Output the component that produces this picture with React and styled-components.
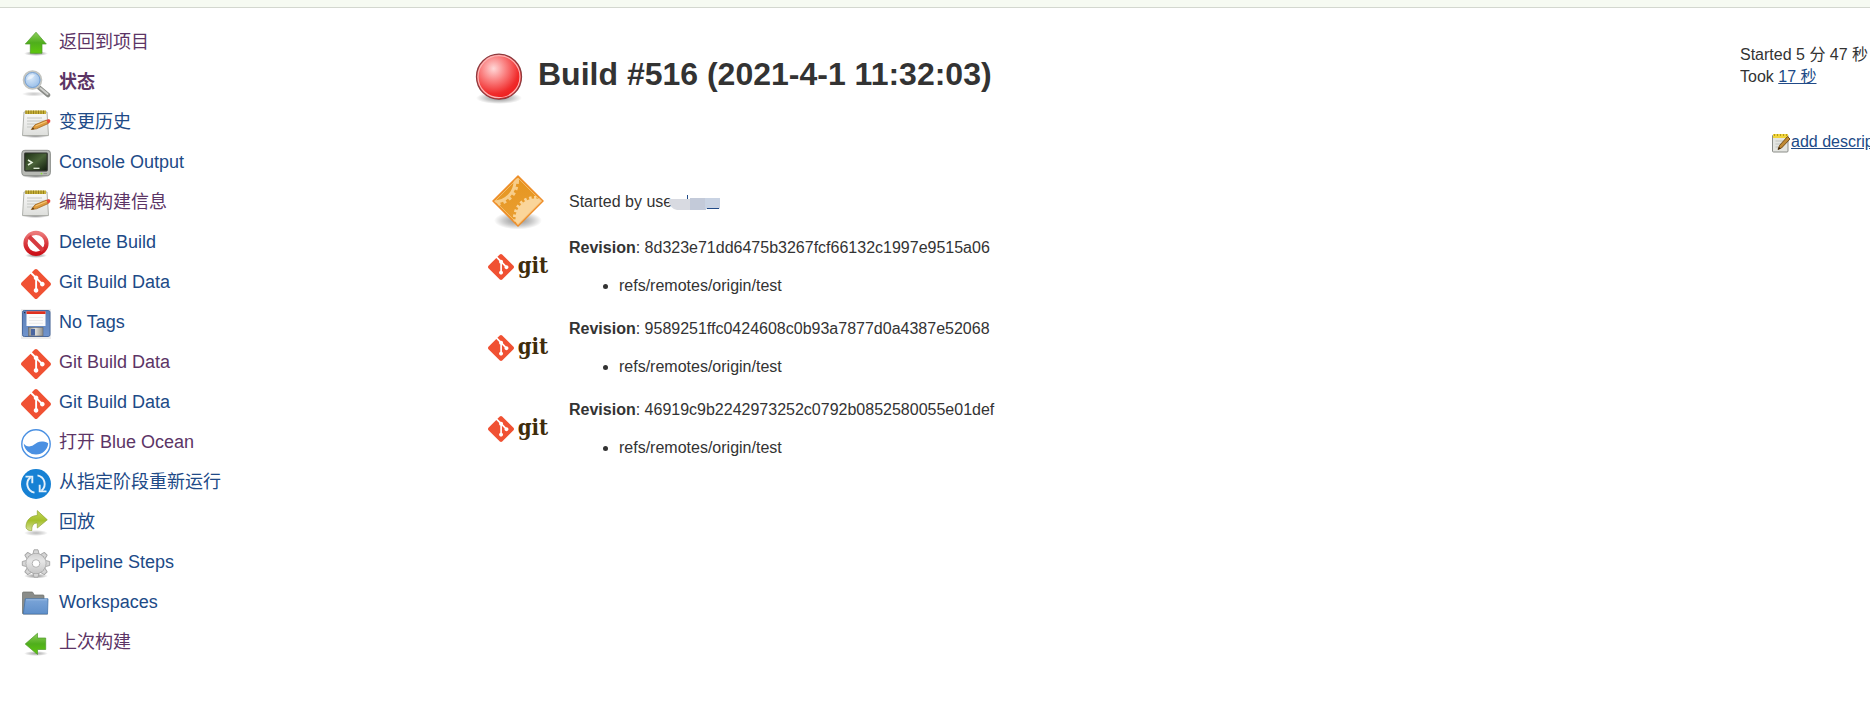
import React from 'react';
import styled, { createGlobalStyle } from 'styled-components';
import { SiGit } from 'react-icons/si';

let GlobalStyle = createGlobalStyle`
  body {
    margin: 0;
    background: #fff;
    color: #333;
    font-family: "Liberation Sans", "Noto Sans CJK SC", sans-serif;
    font-size: 16px;
    line-height: 22px;
    overflow-x: hidden;
  }`, Breadcrumbs = styled.header`
  height: 7px;
  background: #f6faf2;
  border-bottom: 1px solid #d3d7cf;`, Page = styled.div`
  display: flex;
  align-items: flex-start;`, Sidebar = styled.nav`
  flex: 0 0 454px;
  padding: 21px 0 0 21px;
  box-sizing: border-box;`, TaskList = styled.ul`
  display: flex;
  flex-direction: column;
  gap: 10px;
  margin: 0;
  padding: 0;
  list-style: none;`, TaskLink = styled.a`
  display: flex;
  align-items: flex-start;
  gap: 8px;
  color: ${({ $visited }) => $visited ? '#5c3566' : '#204a87'};
  font-size: 18px;
  font-weight: ${({ $current }) => $current ? 'bold' : 'normal'};
  line-height: 26px;
  text-decoration: none;
  &:hover { text-decoration: underline; }`, TaskIcon = styled.svg`
  flex: none;
  width: 30px;
  height: 30px;`, GitIcon = styled(SiGit)`
  flex: none;
  width: 30px;
  height: 30px;
  color: #f05133;`, Main = styled.main`
  flex: 1;
  min-width: 0;
  padding: 45px 0 0 21px;`, TitleRow = styled.div`
  display: flex;
  align-items: flex-start;
  gap: 15px;
  margin-bottom: 69px;`, Title = styled.h1`
  margin: 0;
  font-size: 32px;
  line-height: 42px;`, Summary = styled.section`
  display: grid;
  grid-template-columns: 86px 1fr;
  column-gap: 8px;
  align-items: center;
  margin-bottom: ${({ $tight }) => $tight ? '7px' : '21px'};`,
  SummaryIcon = styled.div`
  display: flex;
  justify-content: center;`, Cause = styled.p`
  display: flex;
  align-items: center;
  margin: 0;`, RefList = styled.ul`
  margin: 16px 0 0;
  padding-left: 50px;`, BuildInfo = styled.aside`
  flex: 0 0 130px;
  padding-top: 36px;
  white-space: nowrap;
  overflow: hidden;`, InfoLine = styled.div``, InfoLink = styled.a`
  color: #204a87;
  text-decoration: underline;`, Description = styled.div`
  display: flex;
  align-items: flex-start;
  gap: 1px;
  padding: 43px 0 0 32px;`, NoteIcon = styled.svg`
  flex: none;
  width: 18px;
  height: 22px;`;

// gradients shared by every icon on the page
function Gradients() {
  return <svg width="0" height="0" style={{ display: 'block' }}
    aria-hidden="true">
    <defs>
      <linearGradient id="green" x1="0" y1="0" x2="0" y2="1">
        <stop offset="0" stopColor="#8fcf5c" />
        <stop offset="0.5" stopColor="#4fae1c" />
        <stop offset="1" stopColor="#5fc80c" />
      </linearGradient>
      <radialGradient id="shadow">
        <stop offset="0" stopColor="#000" stopOpacity="0.45" />
        <stop offset="0.6" stopColor="#000" stopOpacity="0.2" />
        <stop offset="1" stopColor="#000" stopOpacity="0" />
      </radialGradient>
      <radialGradient id="lens" cx="0.4" cy="0.35" r="0.7">
        <stop offset="0" stopColor="#dcebfa" />
        <stop offset="1" stopColor="#8fb8e6" />
      </radialGradient>
      <linearGradient id="paper" x1="0" y1="0" x2="0" y2="1">
        <stop offset="0" stopColor="#fafafa" />
        <stop offset="1" stopColor="#dedfdc" />
      </linearGradient>
      <linearGradient id="screen" x1="0" y1="0" x2="1" y2="1">
        <stop offset="0" stopColor="#1e3014" />
        <stop offset="0.5" stopColor="#4a6338" />
        <stop offset="1" stopColor="#101a0b" />
      </linearGradient>
      <linearGradient id="stop" x1="0" y1="0" x2="0" y2="1">
        <stop offset="0" stopColor="#ec7a7a" />
        <stop offset="0.5" stopColor="#d93a3f" />
        <stop offset="1" stopColor="#cc1018" />
      </linearGradient>
      <linearGradient id="floppy" x1="0" y1="0" x2="0" y2="1">
        <stop offset="0" stopColor="#5a7fb8" />
        <stop offset="1" stopColor="#7094cc" />
      </linearGradient>
      <linearGradient id="metal" x1="0" y1="0" x2="1" y2="0">
        <stop offset="0" stopColor="#8a8a86" />
        <stop offset="0.5" stopColor="#dcdcd8" />
        <stop offset="1" stopColor="#8f8f8b" />
      </linearGradient>
      <linearGradient id="lime" x1="0" y1="0" x2="0" y2="1">
        <stop offset="0" stopColor="#c3d65a" />
        <stop offset="0.5" stopColor="#a5c02c" />
        <stop offset="1" stopColor="#d5e096" />
      </linearGradient>
      <linearGradient id="gear" x1="0" y1="0" x2="0" y2="30"
        gradientUnits="userSpaceOnUse">
        <stop offset="0" stopColor="#c4c4c4" />
        <stop offset="0.4" stopColor="#e6e6e6" />
        <stop offset="1" stopColor="#b8b8b8" />
      </linearGradient>
      <linearGradient id="folder" x1="0" y1="0" x2="0" y2="1">
        <stop offset="0" stopColor="#7ba5d8" />
        <stop offset="1" stopColor="#5f8fca" />
      </linearGradient>
      <radialGradient id="ball" cx="0.38" cy="0.32" r="0.7">
        <stop offset="0" stopColor="#ffd8d8" />
        <stop offset="0.4" stopColor="#fa7f7f" />
        <stop offset="0.8" stopColor="#f02b2b" />
        <stop offset="1" stopColor="#ee1c1c" />
      </radialGradient>
      <linearGradient id="orange" x1="0" y1="0" x2="0" y2="1">
        <stop offset="0" stopColor="#e5951f" />
        <stop offset="1" stopColor="#ea9f33" />
      </linearGradient>
      <clipPath id="diamond">
        <path d="M27 2 52 27 27 52 2 27Z" />
      </clipPath>
    </defs>
  </svg>;
}

function UpIcon() {
  return <TaskIcon viewBox="0 0 30 30">
    <ellipse cx="15" cy="24.500" rx="12" ry="2.500" fill="url(#shadow)" />
    <path d="M15 3.200 25.300 15H21V24.300H9.300V15H4.300Z" fill="url(#green)"
      stroke="#4e9a2a" strokeWidth="0.700" strokeLinejoin="round" />
  </TaskIcon>;
}

function SearchIcon() {
  return <TaskIcon viewBox="0 0 30 30">
    <ellipse cx="13" cy="25" rx="12" ry="2.500" fill="url(#shadow)"
      opacity="0.5" />
    <path d="M18 18.500 27 26" stroke="#8a8c88" strokeWidth="4.500"
      strokeLinecap="round" />
    <path d="M19.500 19.200 26.500 25" stroke="#cfd0cd" strokeWidth="2"
      strokeLinecap="round" />
    <circle cx="11.500" cy="11" r="8.800" fill="url(#lens)"
      stroke="#c3c5c1" strokeWidth="2" />
    <circle cx="11.500" cy="11" r="7.500" fill="none" stroke="#6f9bd0"
      strokeWidth="0.900" />
    <path d="M6 11A6 6 0 0 1 14 6C12 9 9.500 10.500 6 11Z" fill="#fff"
      opacity="0.5" />
  </TaskIcon>;
}

function NotepadIcon() {
  return <TaskIcon viewBox="0 0 30 30">
    <ellipse cx="14.500" cy="27" rx="14" ry="2" fill="url(#shadow)" />
    <path d="M3 3H26L27.500 26.500H1.500Z" fill="url(#paper)"
      stroke="#a7a9a4" strokeWidth="0.900" strokeLinejoin="round" />
    <path d="M4.300 1.500H25V5H4.300Z" fill="#c9b23a" />
    <path d="M5 1.500V5M7.500 1.500V5M10 1.500V5M12.500 1.500V5M15 1.500V5
      M17.500 1.500V5M20 1.500V5M22.500 1.500V5" stroke="#8f7a1c"
      strokeWidth="0.900" />
    <path d="M6 9H21M6 12H23M6 15H18M6 18H13" stroke="#c4c6c2"
      strokeWidth="1" />
    <path d="M10.300 20.500 14 15.800 25.500 11 27.300 14.500 15.500 19.800Z"
      fill="#dd9a3c" stroke="#9c5f14" strokeWidth="0.700" />
    <path d="M14.500 17 25.800 12.300" stroke="#f5c97c" strokeWidth="1" />
    <path d="M10.300 20.500 12 18.300 13.300 20.200Z" fill="#5a3a12" />
    <path d="M25.300 11 28 10Q30 11 29.200 13.300L27.100 14.500Z"
      fill="#e8483a" />
  </TaskIcon>;
}

function ConsoleIcon() {
  return <TaskIcon viewBox="0 0 30 30">
    <ellipse cx="15" cy="27.200" rx="14" ry="2" fill="url(#shadow)" />
    <rect x="0.800" y="1.300" width="28.600" height="25.400" rx="3"
      fill="#b7b9b4" stroke="#858783" strokeWidth="0.900" />
    <rect x="3.800" y="4" width="22.400" height="17.800" rx="0.800"
      fill="url(#screen)" stroke="#2c2e2a" strokeWidth="1.200" />
    <path d="M7 11 11 13.500 7 16" fill="none" stroke="#e5f1dc"
      strokeWidth="1.500" />
    <path d="M12.500 19.300H18.500" stroke="#e5f1dc" strokeWidth="1.300" />
    <circle cx="20.500" cy="24.600" r="0.900" fill="#8ae234" />
    <path d="M22.500 24.600H26" stroke="#8b8d88" strokeWidth="0.900" />
  </TaskIcon>;
}

function DeleteIcon() {
  return <TaskIcon viewBox="0 0 30 30">
    <ellipse cx="15" cy="26.500" rx="11" ry="2.500" fill="url(#shadow)" />
    <circle cx="15" cy="14.300" r="10.500" fill="none" stroke="url(#stop)"
      strokeWidth="4.200" />
    <path d="M8 7.500 22 21.500" stroke="#d63b40" strokeWidth="4" />
  </TaskIcon>;
}

function FloppyIcon() {
  return <TaskIcon viewBox="0 0 30 30">
    <rect width="30" height="30" fill="#ededed" />
    <rect x="1.500" y="1.500" width="27.500" height="26" rx="1.800"
      fill="url(#floppy)" stroke="#4a6a9e" strokeWidth="1" />
    <rect x="5.500" y="2.500" width="19" height="14.500" fill="#fbfbfb" />
    <rect x="5.500" y="2.300" width="19" height="2.700" fill="#e0301e" />
    <path d="M8 8.500H22M8 11.500H22M8 14.300H22" stroke="#e6e6e6"
      strokeWidth="0.800" />
    <rect x="7.500" y="18.500" width="14.500" height="8.500"
      fill="url(#metal)" stroke="#65676a" strokeWidth="0.600" />
    <rect x="10" y="20" width="4" height="6.500" fill="#4a66a0" />
    <rect x="3" y="3" width="1.300" height="1.300" fill="#22304c" />
  </TaskIcon>;
}

function OceanIcon() {
  return <TaskIcon viewBox="0 0 30 30">
    <circle cx="15" cy="15" r="14.200" fill="#fff" stroke="#4a90e2"
      strokeWidth="1.400" />
    <path d="M2.700 14.500C5 17.500 8.500 18.500 12.500 16
      S19.500 10.800 27.200 14.200A12.300 12.300 0 0 1 2.700 14.500Z"
      fill="#4a90e2" />
  </TaskIcon>;
}

function RestartIcon() {
  return <TaskIcon viewBox="0 0 30 30">
    <circle cx="15" cy="15" r="15" fill="#1681d4" />
    <g fill="none" stroke="#e4f1fb" strokeWidth="1.900">
      <path d="M13.500 23.600A8.800 8.800 0 0 1 9.500 8.200" />
      <path d="M4.500 7.600H11.300V14.300" />
      <path d="M16.500 6.400A8.800 8.800 0 0 1 20.500 21.800" />
      <path d="M25.500 22.400H18.700V15.700" />
    </g>
  </TaskIcon>;
}

function ReplayIcon() {
  return <TaskIcon viewBox="0 0 30 30">
    <ellipse cx="15" cy="24" rx="12" ry="3" fill="url(#shadow)"
      opacity="0.6" />
    <path d="M16.300 1.600 26.300 10.800 16.300 19V14
      C12.500 13.800 10.500 17 10.800 21.500C7.500 21.800 4.800 20.500 5 17
      C5.500 10.500 10.500 6.500 16.300 6.500Z" fill="url(#lime)"
      stroke="#8fa530" strokeWidth="0.700" strokeLinejoin="round" />
  </TaskIcon>;
}

function GearIcon() {
  return <TaskIcon viewBox="0 0 30 30">
    <ellipse cx="15" cy="27" rx="12" ry="2.500" fill="url(#shadow)" />
    <g stroke="#a8a8a8" strokeWidth="1">
      {[0, 45, 90, 135, 180, 225, 270, 315].map(turn =>
        <path key={turn} d="M11.500 7 13 0.800H17L18.500 7Z" fill="#d6d6d6"
          strokeLinejoin="round" transform={`rotate(${turn} 15 14.5)`} />)}
      <circle cx="15" cy="14.500" r="10" />
    </g>
    <circle cx="15" cy="14.500" r="9.900" fill="url(#gear)" />
    <circle cx="15" cy="14.500" r="3.800" fill="#fff" stroke="#b4b4b4"
      strokeWidth="1" />
  </TaskIcon>;
}

function FolderIcon() {
  return <TaskIcon viewBox="0 0 30 30">
    <path d="M1.500 24.500V4Q1.500 3 2.500 3H11Q12 3 12.500 4.500L13 6H22
      Q23 6 23 7V24.500Z" fill="#8a8c89" stroke="#6b6d69"
      strokeWidth="0.700" />
    <path d="M4.300 9.800H27L26.500 25H2.300Z" fill="url(#folder)"
      stroke="#4473ab" strokeWidth="0.800" strokeLinejoin="round" />
    <path d="M5 10.800H26" stroke="#a5c4e8" strokeWidth="0.800" />
    <path d="M2 25.600H26.800" stroke="#555" strokeWidth="0.600"
      opacity="0.5" />
  </TaskIcon>;
}

function BackIcon() {
  return <TaskIcon viewBox="0 0 30 30">
    <ellipse cx="15" cy="24.500" rx="12" ry="2.500" fill="url(#shadow)"
      opacity="0.8" />
    <path d="M4.200 15 16.500 4.300V9H24.700V20.500H16.500V25.500Z"
      fill="url(#green)" stroke="#4e9a2a" strokeWidth="0.700"
      strokeLinejoin="round" />
  </TaskIcon>;
}

function FailedBall() {
  return <svg width="48" height="52" viewBox="0 0 48 52" role="img"
    aria-label="Failed">
    <ellipse cx="24" cy="45" rx="23" ry="6" fill="url(#shadow)" />
    <circle cx="24" cy="23.700" r="22.500" fill="url(#ball)"
      stroke="#8c3a3e" strokeWidth="1.300" />
    <circle cx="24" cy="23.700" r="21" fill="none" stroke="#fbb5b5"
      strokeWidth="1.200" />
  </svg>;
}

// two cog wheels cut off by the diamond, dashes make the teeth
function CauseIcon() {
  return <svg width="54" height="56" viewBox="0 0 54 56"
    aria-hidden="true">
    <ellipse cx="27" cy="46.500" rx="24" ry="9" fill="url(#shadow)" />
    <path d="M27 2 52 27 27 52 2 27Z" fill="url(#orange)" />
    <g clipPath="url(#diamond)">
      <circle cx="3" cy="7" r="21" fill="none" stroke="#f7cd8a"
        strokeWidth="3" />
      <circle cx="3" cy="7" r="23.500" fill="none" stroke="#f7cd8a"
        strokeWidth="3" strokeDasharray="3 3" />
      <circle cx="44" cy="44" r="19.500" fill="#fad59a" />
      <circle cx="44" cy="44" r="20.500" fill="none" stroke="#fad59a"
        strokeWidth="3" strokeDasharray="2.500 2.500" />
    </g>
    <path d="M27 2 52 27 27 52 2 27Z" fill="none"
      stroke="#ee8e2a" strokeWidth="1.500" strokeLinejoin="round" />
    <path d="M27 4 50 27 27 50 4 27Z" fill="none"
      stroke="#f9c982" strokeWidth="0.700" strokeLinejoin="round" />
  </svg>;
}

let LogoBox = styled.div`
  display: flex;
  align-items: center;
  gap: 4px;`, LogoMark = styled(SiGit)`
  width: 26px;
  height: 26px;
  color: #f05133;`, LogoWord = styled.span`
  padding-bottom: 4px;
  color: #3e2c0b;
  font-family: "DejaVu Serif Condensed", "DejaVu Serif", serif;
  font-size: 22px;
  font-weight: bold;`;

function GitLogo() {
  return <LogoBox><LogoMark /><LogoWord>git</LogoWord></LogoBox>;
}

let Redaction = styled.svg`
  width: 52px;
  height: 18px;
  margin-left: -4px;`;

// smudge over the name of the user
function HiddenUser() {
  return <Redaction viewBox="0 0 52 18" aria-hidden="true">
    <path d="M19.500 2V6" stroke="#204a87" strokeWidth="1" />
    <path d="M0 6H23V17H9Q2 16 0 6Z" fill="#d8dae1" />
    <rect x="22" y="5" width="16" height="12" fill="#c3cad9" />
    <path d="M37 5H52V15L51 16H37Z" fill="#c9d3e3" />
    <rect x="39" y="15" width="12" height="1" fill="#204a87" />
  </Redaction>;
}

function EditNote() {
  return <NoteIcon viewBox="0 0 18 22" aria-hidden="true">
    <rect x="0.500" y="4" width="15.500" height="17" rx="1"
      fill="#e4e5e1" stroke="#8b8d88" />
    <path d="M1 3H16V7H1Z" fill="#f0d43c" />
    <path d="M2.500 3V5M5.500 3V5M8.500 3V5M11.500 3V5M14.500 3V5"
      stroke="#b79a1a" strokeWidth="1" />
    <path d="M3.500 10H11M3.500 13H9M3.500 16H6" stroke="#bfc1bc" />
    <path d="M6 18.500 7.500 14.500 15.500 5.500 18 8 9.500 17Z"
      fill="#c08a34" stroke="#6b4410" strokeWidth="0.900" />
    <path d="M6 18.500 7 16 8.500 17.500Z" fill="#2e1c04" />
  </NoteIcon>;
}

let tasks = [
    { text: '返回到项目', Icon: UpIcon, visited: true },
    { text: '状态', Icon: SearchIcon, visited: true, current: true },
    { text: '变更历史', Icon: NotepadIcon },
    { text: 'Console Output', Icon: ConsoleIcon },
    { text: '编辑构建信息', Icon: NotepadIcon, visited: true },
    { text: 'Delete Build', Icon: DeleteIcon },
    { text: 'Git Build Data', Icon: GitIcon },
    { text: 'No Tags', Icon: FloppyIcon },
    { text: 'Git Build Data', Icon: GitIcon, visited: true },
    { text: 'Git Build Data', Icon: GitIcon },
    { text: '打开 Blue Ocean', Icon: OceanIcon, visited: true },
    { text: '从指定阶段重新运行', Icon: RestartIcon },
    { text: '回放', Icon: ReplayIcon },
    { text: 'Pipeline Steps', Icon: GearIcon },
    { text: 'Workspaces', Icon: FolderIcon },
    { text: '上次构建', Icon: BackIcon, visited: true }
  ], revisions = [
    '8d323e71dd6475b3267fcf66132c1997e9515a06',
    '9589251ffc0424608c0b93a7877d0a4387e52068',
    '46919c9b2242973252c0792b0852580055e01def'
  ];

function App() {
  return <>
    <GlobalStyle />
    <Gradients />
    <Breadcrumbs />
    <Page>
      <Sidebar>
        <TaskList>
          {tasks.map(({ text, Icon, visited, current }, n) =>
            <li key={n}>
              <TaskLink href="#" $visited={visited} $current={current}>
                <Icon />{text}
              </TaskLink>
            </li>)}
        </TaskList>
      </Sidebar>
      <Main>
        <TitleRow>
          <FailedBall />
          <Title>Build #516 (2021-4-1 11:32:03)</Title>
        </TitleRow>
        <Summary $tight>
          <SummaryIcon><CauseIcon /></SummaryIcon>
          <Cause>Started by use<HiddenUser /></Cause>
        </Summary>
        {revisions.map(hash =>
          <Summary key={hash}>
            <SummaryIcon><GitLogo /></SummaryIcon>
            <div>
              <b>Revision</b>: {hash}
              <RefList><li>refs/remotes/origin/test</li></RefList>
            </div>
          </Summary>)}
      </Main>
      <BuildInfo>
        <InfoLine>Started 5 分 47 秒</InfoLine>
        <InfoLine>Took <InfoLink href="#">17 秒</InfoLink></InfoLine>
        <Description>
          <EditNote />
          <InfoLink href="#">add description</InfoLink>
        </Description>
      </BuildInfo>
    </Page>
  </>;
}

export default App;
